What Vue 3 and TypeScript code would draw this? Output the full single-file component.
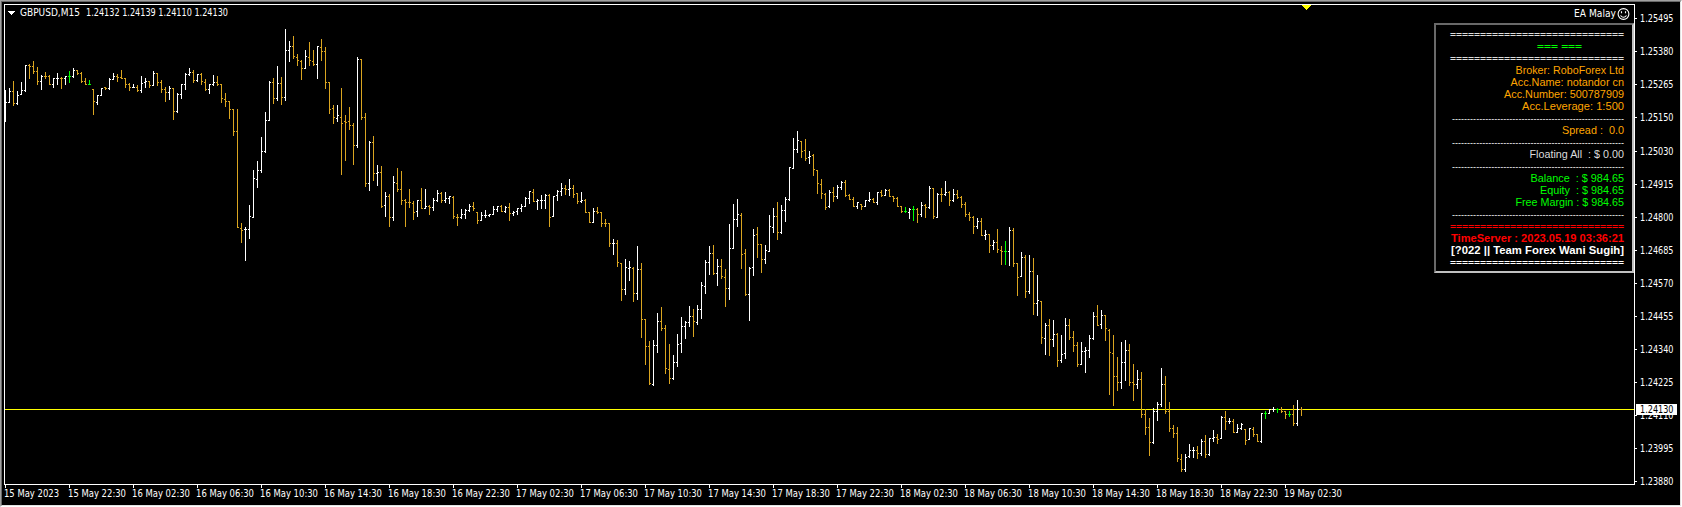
<script setup lang="ts">
interface Bar { x: number; kind: string; high: number; low: number; open: number; close: number }

// kind, high, low, open, close. Kinds: u = up, d = down, e = unchanged
const raw = `
u 90 122 102 102|u 88 103 102 91|d 81 106 91 103|u 91 105 103 95|u 82 95 94 90|u 65 92 90 65|d 64 79 65 66|d 61 74 66 71
d 67 85 71 81|u 75 90 81 76|d 72 79 76 76|d 75 85 76 84|u 78 88 84 78|u 73 85 78 78|d 77 89 78 78|u 76 85 78 76
e 71 83 76 76|u 68 78 76 70|d 70 75 70 73|d 72 83 73 81|d 78 85 81 84|e 80 85 84 84|d 89 115 89 101|u 95 105 102 95
u 88 96 95 88|d 87 90 87 88|u 78 90 88 79|u 73 80 79 76|d 74 82 76 77|d 70 79 77 78|d 78 88 78 84|d 83 91 84 87
u 84 88 87 87|d 85 92 87 90|u 76 93 90 83|u 78 88 82 81|d 81 88 81 85|u 71 86 85 73|d 73 86 73 82|d 80 93 82 89
d 87 102 89 92|u 86 100 92 88|d 88 120 88 111|u 93 113 111 94|u 84 99 94 84|u 73 90 84 74|u 68 76 74 72|d 70 83 72 80
u 74 82 80 74|d 73 85 74 81|d 79 91 82 89|u 84 94 89 84|u 75 86 84 82|d 76 86 82 84|d 84 103 84 98|d 93 107 99 101
d 101 119 101 109|d 109 136 109 131|d 109 228 131 227|d 223 243 228 230|u 227 261 229 229|u 205 239 229 216|u 170 218 217 178|u 161 188 179 170
u 137 173 170 151|u 112 153 151 120|u 81 121 120 82|d 78 104 82 98|u 66 101 98 83|d 77 105 83 97|u 29 101 97 50|u 41 62 50 46
d 36 59 46 56|d 54 66 57 60|d 60 80 61 68|u 50 69 68 56|d 42 66 57 60|d 50 66 61 64|u 46 79 64 46|d 39 61 47 51
d 47 89 51 82|d 82 114 82 109|d 105 124 108 117|u 105 122 118 115|d 88 175 117 123|d 115 161 121 122|d 107 130 121 125|d 123 165 125 145
u 57 148 145 59|d 59 120 59 117|d 113 187 117 183|u 141 191 183 142|d 136 181 142 173|u 165 186 173 172|d 166 208 172 206|u 192 217 205 196
d 194 227 196 217|u 176 221 217 182|d 168 192 183 189|d 171 205 189 200|d 199 227 200 202|d 189 208 202 202|d 201 220 203 212|u 200 217 211 200
d 188 209 200 208|u 189 209 208 206|d 205 215 206 207|u 198 211 207 200|u 190 202 200 193|d 192 203 193 200|u 192 203 200 198|u 196 204 198 196
d 196 219 197 216|d 214 226 217 217|u 209 219 217 214|u 209 219 214 210|u 204 212 210 206|d 202 211 206 208|d 212 224 212 220|u 212 221 220 215
u 210 218 215 215|u 214 217 215 214|u 206 215 214 209|u 206 212 209 206|d 205 212 206 211|u 206 213 211 207|d 203 221 207 213|u 211 216 213 212
u 208 215 211 208|u 204 212 208 206|u 197 207 206 198|u 191 204 198 191|d 189 202 192 201|u 199 210 201 200|u 195 209 200 200|u 194 209 200 195
d 194 227 195 217|u 196 217 216 196|u 190 201 195 191|u 183 196 191 188|d 185 195 188 189|u 179 196 189 188|d 185 198 188 194|d 193 204 193 201
u 192 203 201 200|d 199 213 200 212|d 212 223 212 222|u 208 223 222 211|d 207 214 211 212|d 212 227 212 223|d 219 227 223 223|d 223 247 223 243
u 239 255 243 243|d 240 267 243 262|d 263 301 263 289|u 259 295 289 267|u 261 281 268 267|d 267 302 268 293|u 246 300 293 269|d 263 338 269 319
d 319 365 319 346|d 341 385 346 383|u 340 386 384 345|u 313 353 345 321|d 307 331 321 328|d 325 374 328 368|d 344 384 369 378|u 355 380 378 362
u 334 367 362 344|u 317 353 343 326|u 321 339 326 322|u 306 327 322 316|d 309 337 316 321|u 305 325 322 309|u 282 319 309 285|u 260 294 286 262
u 246 275 262 253|d 245 275 253 273|u 259 286 273 266|d 259 279 266 276|d 269 307 277 288|u 224 300 288 248|u 204 249 248 219|u 199 227 219 214
d 213 269 215 254|d 249 296 253 294|u 267 321 294 268|u 229 276 267 235|d 227 258 234 244|d 244 273 244 259|u 245 264 259 250|u 215 252 251 226
u 208 233 227 216|d 202 240 216 232|u 205 234 232 210|u 197 222 210 199|u 167 201 199 167|u 138 169 168 149|u 131 153 149 140|d 141 158 141 151
d 139 161 150 158|u 151 164 157 156|d 154 176 155 169|d 170 194 170 183|d 179 199 184 193|d 193 210 194 207|u 190 208 206 192|d 187 202 192 196
u 185 199 196 187|u 181 190 187 182|d 180 197 182 195|d 194 200 195 199|d 197 207 199 206|u 202 209 206 202|d 204 210 204 206|u 200 207 206 200
u 192 202 200 199|d 198 203 199 202|u 192 205 202 192|d 190 197 192 195|u 189 196 195 190|d 189 197 190 196|d 196 202 196 198|d 197 207 198 206
d 206 213 206 211|e 207 213 211 211|u 208 219 212 209|e 206 221 209 209|d 208 223 209 214|u 202 217 214 205|d 204 218 205 207|u 186 209 207 188
d 188 219 188 216|u 193 218 217 194|d 188 202 194 194|u 181 196 194 192|d 191 206 192 200|u 189 202 200 194|d 190 199 194 197|d 196 208 197 204
d 202 217 204 214|d 212 221 214 217|d 216 234 217 226|u 218 229 226 221|d 218 236 221 235|u 230 240 235 234|d 234 253 234 245|u 240 250 245 242
d 229 253 242 249|d 246 265 250 251|e 241 265 251 251|u 227 266 251 230|d 228 267 230 263|d 263 296 263 277|u 252 277 276 257|d 255 298 257 291
u 255 294 291 271|d 258 315 271 303|u 275 316 303 300|d 301 344 301 337|u 323 355 338 325|d 319 356 325 339|u 320 347 339 334|d 333 367 334 360
u 335 363 360 354|u 318 359 353 325|d 319 340 325 337|d 331 352 337 345|d 342 367 345 364|u 342 365 364 351|u 347 373 351 350|u 335 358 350 338
u 312 340 338 316|d 305 326 316 325|u 310 329 324 315|d 315 341 315 328|d 329 395 330 352|d 335 406 353 376|d 357 391 376 382|u 342 389 382 362
u 340 381 362 350|d 344 386 350 382|d 364 401 382 384|u 370 389 384 379|d 372 418 379 414|d 409 435 414 427|d 418 456 427 442|u 408 444 442 411
u 402 421 411 404|u 368 407 404 384|d 376 414 384 411|d 402 432 411 428|d 425 438 428 433|d 427 462 433 458|d 454 472 459 469|u 454 472 469 457
u 444 458 456 450|u 447 458 450 450|d 446 459 450 453|u 439 456 453 441|d 435 458 441 454|u 438 456 454 438|u 430 442 438 437|d 434 444 437 439
u 416 439 438 417|d 411 430 417 421|u 418 424 421 421|d 419 433 421 432|u 424 433 432 428|u 423 430 428 424|d 429 445 429 440|u 428 440 439 428
d 427 437 429 434|d 434 442 434 441|u 413 443 441 413|e 411 419 413 413|u 409 414 413 409|u 407 412 409 409|e 408 413 409 409|d 407 413 409 411
d 411 419 411 414|e 411 417 414 414|d 405 426 414 423|u 400 426 423 409|d 407 416 409 409`

const bars: Bar[] = raw.trim().split(/[|\n]/).map((entry, i) => {
  const [kind, ...v] = entry.trim().split(' ')
  const [high, low, open, close] = v.map(Number)
  return { x: 5 + i * 4, kind, high, low, open, close }
})

function barPath(b: Bar): string {
  const left = b.x > 5 ? `M${b.x - 1} ${b.open}h1v1h-1z` : ''
  return `M${b.x} ${b.high}h1V${b.low}h-1z${left}M${b.x + 1} ${b.close}h1v1h-1z`
}

const series = ['d', 'u', 'e'].map(kind => ({
  kind,
  path: bars.filter(b => b.kind === kind).map(barPath).join(''),
}))

const prices = [
  '1.25495', '1.25380', '1.25265', '1.25150', '1.25030', '1.24915', '1.24800', '1.24685',
  '1.24570', '1.24455', '1.24340', '1.24225', '1.24110', '1.23995', '1.23880',
].map((text, i) => ({ text, y: (i < 4 ? 18 : 19) + i * 33 }))

const times = [
  '15 May 2023', '15 May 22:30', '16 May 02:30', '16 May 06:30', '16 May 10:30', '16 May 14:30',
  '16 May 18:30', '16 May 22:30', '17 May 02:30', '17 May 06:30', '17 May 10:30', '17 May 14:30',
  '17 May 18:30', '17 May 22:30', '18 May 02:30', '18 May 06:30', '18 May 10:30', '18 May 14:30',
  '18 May 18:30', '18 May 22:30', '19 May 02:30',
].map((text, i) => ({ text, x: 5 + i * 64, width: i ? 58 : 55 }))

const eq = '='.repeat(29)
const dash = '-'.repeat(57)
const lines = [
  { text: eq, tone: 'rule pale', w: 174 },
  { text: '=== ===', tone: 'rule lime mark', w: 45 },
  { text: eq, tone: 'rule pale', w: 174 },
  { text: 'Broker: RoboForex Ltd', tone: 'orange', w: 108.5 },
  { text: 'Acc.Name: notandor cn', tone: 'orange', w: 113.5 },
  { text: 'Acc.Number: 500787909', tone: 'orange', w: 120 },
  { text: 'Acc.Leverage: 1:500', tone: 'orange', w: 102 },
  { text: dash, tone: 'pale', w: 172 },
  { text: 'Spread :  0.0', tone: 'orange', w: 62 },
  { text: dash, tone: 'pale', w: 172 },
  { text: 'Floating All  : $ 0.00', tone: 'pale', w: 94.5 },
  { text: dash, tone: 'pale', w: 172 },
  { text: 'Balance  : $ 984.65', tone: 'lime', w: 93.5 },
  { text: 'Equity  : $ 984.65', tone: 'lime', w: 84 },
  { text: 'Free Margin : $ 984.65', tone: 'lime', w: 108.5 },
  { text: dash, tone: 'pale', w: 172 },
  { text: eq, tone: 'rule red', w: 174 },
  { text: 'TimeServer : 2023.05.19 03:36:21', tone: 'red', w: 173 },
  { text: '[?022 || Team Forex Wani Sugih]', tone: 'white', w: 173 },
  { text: eq, tone: 'rule white', w: 174 },
]
</script>

<template>
  <main class="terminal">
    <svg class="chart" width="1678" height="503" viewBox="2 2 1678 503">
      <g shape-rendering="crispEdges">
        <rect class="bid" x="5" y="409" width="1629" height="1" />
        <path v-for="s in series" :key="s.kind" :class="s.kind" :d="s.path" />
        <rect class="frame" x="4.5" y="4.5" width="1630" height="480" />
        <rect v-for="p in prices" :key="p.text" class="tick" x="1635" :y="p.y" width="2" height="1" />
        <rect v-for="t in times" :key="t.text" class="tick" :x="t.x" y="485" width="1" height="3" />
        <path class="arrow" d="M8 11h7v1h-1v1h-1v1h-1v1h-1v-1h-1v-1h-1v-1h-1z" />
        <path class="shift" d="M1302 5h9v1h-1v1h-1v1h-1v1h-1v1h-1v-1h-1v-1h-1v-1h-1v-1h-1z" />
      </g>
      <g class="label">
        <text x="20" y="16" textLength="60" lengthAdjust="spacingAndGlyphs">GBPUSD,M15</text>
        <text x="86" y="16" textLength="142" lengthAdjust="spacingAndGlyphs">1.24132 1.24139 1.24110 1.24130</text>
        <text x="1574" y="17" textLength="42" lengthAdjust="spacingAndGlyphs">EA Malay</text>
        <text v-for="p in prices" :key="p.text" x="1640" :y="p.y + 4" textLength="33.5" lengthAdjust="spacingAndGlyphs">{{ p.text }}</text>
        <text v-for="t in times" :key="t.text" :x="t.x - 1" y="497" :textLength="t.width" lengthAdjust="spacingAndGlyphs">{{ t.text }}</text>
        <rect class="tick" x="1636" y="404" width="41" height="11" />
        <text class="current" x="1640" y="413" textLength="33.5" lengthAdjust="spacingAndGlyphs">1.24130</text>
      </g>
      <g class="smile">
        <circle cx="1623.5" cy="14" r="5.4" />
        <path d="M1620.5 15.5q3 3.6 6 0M1621.5 11.2v2M1625.5 11.2v2" />
      </g>
    </svg>
    <aside class="panel">
      <svg v-for="(l, i) in lines" :key="i" class="line" :class="l.tone" width="174" height="12">
        <text x="0" y="10" :textLength="l.w" lengthAdjust="spacingAndGlyphs" :transform="`translate(${(l.tone.includes('mark') ? 132 : 174) - l.w} 0)`" xml:space="preserve">{{ l.text }}</text>
      </svg>
    </aside>
  </main>
</template>

<style>
body { background: #000; overflow: hidden; }
</style>

<style scoped>
.terminal {
  position: relative;
  box-sizing: border-box;
  width: 1682px;
  height: 507px;
  overflow: hidden;
  background: #000;
  border: 1px solid;
  border-color: #a0a0a0 #fff #fff #a0a0a0;
}
.chart {
  display: block;
  border: 1px solid;
  border-color: #696969 #e3e3e3 #e3e3e3 #696969;
}
.u, .tick, .arrow { fill: #fff; }
.d { fill: #daa520; }
.e { fill: #0f0; }
.bid, .shift { fill: #ff0; }
.frame { fill: none; stroke: #fff; }
.label { font: 9.7px "DejaVu Sans", sans-serif; fill: #fff; }
.label .current { fill: #000; }
.smile { fill: none; stroke: #fff; stroke-width: 1.1; }
.panel {
  position: absolute;
  left: 1433px;
  top: 22px;
  box-sizing: border-box;
  width: 200px;
  height: 250px;
  padding: 3px 8px 0 14px;
  border: 2px solid;
  border-color: #696969 #c0c0c0 #c0c0c0 #696969;
}
.line {
  display: block;
  overflow: visible;
  font: 11px "Liberation Sans", Arial, sans-serif;
}
.line text { white-space: pre; }
.pale { fill: #dcdcdc; }
.orange { fill: #ffa500; }
.lime { fill: #0f0; }
.red { fill: #f00; font-weight: bold; }
.white { fill: #fff; font-weight: bold; }
.rule { font-size: 9.5px; font-weight: bold; }
</style>
